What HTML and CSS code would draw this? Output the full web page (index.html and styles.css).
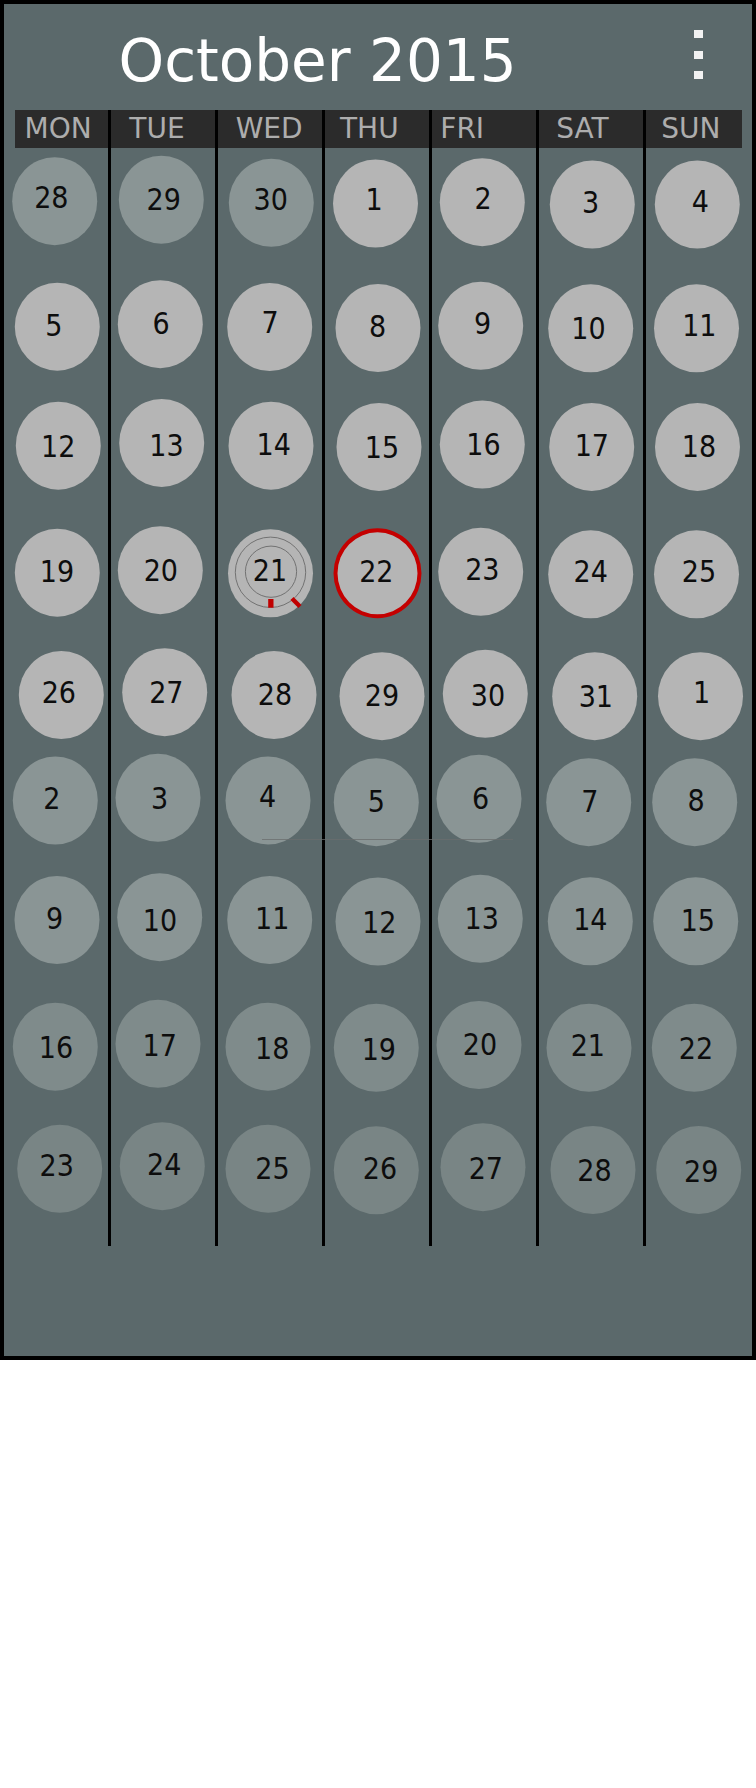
FILE: index.html
```html
<!DOCTYPE html>
<html lang="en">
<head>
<meta charset="utf-8">
<title>October 2015</title>
<link rel="stylesheet" href="styles.css">
</head>
<body>
<div class="frame">
  <div class="top">
    <h1 class="title">October 2015</h1>
    <div class="menu"><i></i><i></i><i></i></div>
  </div>
  <div class="cal">
    <div class="col c1">
      <div class="wd">MON</div>
      <div class="days">
        <div class="day"><div class="circ a"><span>28</span></div></div>
        <div class="day"><div class="circ"><span>5</span></div></div>
        <div class="day"><div class="circ"><span>12</span></div></div>
        <div class="day"><div class="circ"><span>19</span></div></div>
        <div class="day"><div class="circ"><span>26</span></div></div>
        <div class="day"><div class="circ a"><span>2</span></div></div>
        <div class="day"><div class="circ a"><span>9</span></div></div>
        <div class="day"><div class="circ b"><span>16</span></div></div>
        <div class="day"><div class="circ c"><span>23</span></div></div>
      </div>
    </div>
    <div class="col c2">
      <div class="wd">TUE</div>
      <div class="days">
        <div class="day"><div class="circ a"><span>29</span></div></div>
        <div class="day"><div class="circ"><span>6</span></div></div>
        <div class="day"><div class="circ"><span>13</span></div></div>
        <div class="day"><div class="circ"><span>20</span></div></div>
        <div class="day"><div class="circ"><span>27</span></div></div>
        <div class="day"><div class="circ a"><span>3</span></div></div>
        <div class="day"><div class="circ a"><span>10</span></div></div>
        <div class="day"><div class="circ b"><span>17</span></div></div>
        <div class="day"><div class="circ c"><span>24</span></div></div>
      </div>
    </div>
    <div class="col c3">
      <div class="wd">WED</div>
      <div class="days">
        <div class="day"><div class="circ a"><span>30</span></div></div>
        <div class="day"><div class="circ"><span>7</span></div></div>
        <div class="day"><div class="circ"><span>14</span></div></div>
        <div class="day"><div class="circ marked">
          <svg class="rings" viewBox="-42.5 -44 85 88" width="85" height="88" aria-hidden="true">
            <circle cx="0" cy="-1" r="35.2" fill="none" stroke="#727272" stroke-width="1"/>
            <circle cx="0.5" cy="-1.6" r="25.6" fill="none" stroke="#727272" stroke-width="1"/>
            <rect x="-2.3" y="25.7" width="5.3" height="8.7" fill="#c00000"/>
            <line x1="21.5" y1="25.2" x2="29.5" y2="33.2" stroke="#c00000" stroke-width="4.5"/>
          </svg>
          <span>21</span></div></div>
        <div class="day"><div class="circ"><span>28</span></div></div>
        <div class="day"><div class="circ a"><span>4</span></div></div>
        <div class="day"><div class="circ a"><span>11</span></div></div>
        <div class="day"><div class="circ b"><span>18</span></div></div>
        <div class="day"><div class="circ c"><span>25</span></div></div>
      </div>
    </div>
    <div class="col c4">
      <div class="wd">THU</div>
      <div class="days">
        <div class="day"><div class="circ"><span>1</span></div></div>
        <div class="day"><div class="circ"><span>8</span></div></div>
        <div class="day"><div class="circ"><span>15</span></div></div>
        <div class="day"><div class="circ today"><span>22</span></div></div>
        <div class="day"><div class="circ"><span>29</span></div></div>
        <div class="day"><div class="circ a"><span>5</span></div></div>
        <div class="day"><div class="circ a"><span>12</span></div></div>
        <div class="day"><div class="circ b"><span>19</span></div></div>
        <div class="day"><div class="circ c"><span>26</span></div></div>
      </div>
    </div>
    <div class="col c5">
      <div class="wd">FRI</div>
      <div class="days">
        <div class="day"><div class="circ"><span>2</span></div></div>
        <div class="day"><div class="circ"><span>9</span></div></div>
        <div class="day"><div class="circ"><span>16</span></div></div>
        <div class="day"><div class="circ"><span>23</span></div></div>
        <div class="day"><div class="circ"><span>30</span></div></div>
        <div class="day"><div class="circ a"><span>6</span></div></div>
        <div class="day"><div class="circ a"><span>13</span></div></div>
        <div class="day"><div class="circ b"><span>20</span></div></div>
        <div class="day"><div class="circ c"><span>27</span></div></div>
      </div>
    </div>
    <div class="col c6">
      <div class="wd">SAT</div>
      <div class="days">
        <div class="day"><div class="circ"><span>3</span></div></div>
        <div class="day"><div class="circ"><span>10</span></div></div>
        <div class="day"><div class="circ"><span>17</span></div></div>
        <div class="day"><div class="circ"><span>24</span></div></div>
        <div class="day"><div class="circ"><span>31</span></div></div>
        <div class="day"><div class="circ a"><span>7</span></div></div>
        <div class="day"><div class="circ a"><span>14</span></div></div>
        <div class="day"><div class="circ b"><span>21</span></div></div>
        <div class="day"><div class="circ c"><span>28</span></div></div>
      </div>
    </div>
    <div class="col c7">
      <div class="wd">SUN</div>
      <div class="days">
        <div class="day"><div class="circ"><span>4</span></div></div>
        <div class="day"><div class="circ"><span>11</span></div></div>
        <div class="day"><div class="circ"><span>18</span></div></div>
        <div class="day"><div class="circ"><span>25</span></div></div>
        <div class="day"><div class="circ"><span>1</span></div></div>
        <div class="day"><div class="circ a"><span>8</span></div></div>
        <div class="day"><div class="circ a"><span>15</span></div></div>
        <div class="day"><div class="circ b"><span>22</span></div></div>
        <div class="day"><div class="circ c"><span>29</span></div></div>
      </div>
    </div>
    <div class="scan"></div>
  </div>
</div>
</body>
</html>
```
FILE: styles.css
```css
html, body { margin: 0; padding: 0; background: #ffffff; }

.frame {
  width: 756px;
  height: 1360px;
  box-sizing: border-box;
  border: 4px solid #000;
  background: #5b696b;
}

.top {
  height: 106px;
  display: flex;
  align-items: flex-start;
}
.title {
  margin: 28px 0 0 0;
  padding-left: 114.5px;
  font: 400 58px/58px "DejaVu Sans", Verdana, sans-serif;
  color: #ffffff;
}
.menu {
  margin: 26px 49px 0 auto;
  display: flex;
  flex-direction: column;
  gap: 12.5px;
}
.menu i { display: block; width: 9px; height: 8px; background: #f2f2f2; }

.cal {
  position: relative;
  width: 746px;
  display: grid;
  grid-template-columns: repeat(7, 1fr);
  column-gap: 3px;
  background: #000;
}
.col {
  background: #5b696b;
  display: flex;
  flex-direction: column;
  padding-bottom: 18px;
  min-width: 0;
}
.wd {
  height: 38px;
  background: #2b2b2b;
  color: #adadad;
  font: 400 28px/38px "DejaVu Sans", Verdana, sans-serif;
  white-space: nowrap;
}
.c1 .wd { margin-left: 10.5px; padding-left: 10.1px; }
.c2 .wd { padding-left: 18.3px; }
.c3 .wd { padding-left: 17.7px; }
.c4 .wd { padding-left: 15px; }
.c5 .wd { padding-left: 8.3px; }
.c6 .wd { padding-left: 17.2px; }
.c7 .wd { margin-right: 8.5px; padding-left: 15.2px; }

.days { display: flex; flex-direction: column; }
.day {
  height: 120px;
  display: flex;
  align-items: center;
  justify-content: center;
}
.circ {
  position: relative;
  width: 85px;
  height: 88px;
  flex: none;
  box-sizing: border-box;
  border-radius: 50%;
  background: #b5b5b5;
  display: flex;
  align-items: center;
  justify-content: center;
  transform: translate(var(--dx, 0px), var(--dy, 0px));
  color: #0d0d0d;
  font: 400 30px/30px "DejaVu Sans Condensed", "DejaVu Sans", sans-serif;
  font-stretch: condensed;
}
.circ span { display: block; position: relative; transform: translate(var(--tx, 0px), var(--ty, 0px)); }
.circ.a { background: #8a9595; }
.circ.b { background: #7f8b8b; }
.circ.c { background: #798585; }
.circ.today { width: 88px; height: 90px; border: 4px solid #c40000; }
.rings { position: absolute; left: 0; top: 0; }

.scan {
  position: absolute;
  left: 257.7px;
  top: 729.3px;
  width: 251.6px;
  height: 1px;
  background: rgba(105, 110, 110, 0.75);
}

/* per-cell jitter: circle offset (dx,dy) and number offset (tx,ty) */
.c1 .day:nth-child(1){--dx:-1.8px;--dy:-6.8px;--tx:-2.9px;--ty:-3.7px}
.c2 .day:nth-child(1){--dx:-2.2px;--dy:-8.3px;--tx:2.9px;--ty:0.5px}
.c3 .day:nth-child(1){--dx:0.8px;--dy:-5.2px;--tx:-0.1px;--ty:-2.5px}
.c4 .day:nth-child(1){--dx:-2px;--dy:-4.5px;--tx:-1px;--ty:-4px}
.c5 .day:nth-child(1){--dx:-2.2px;--dy:-5.8px;--tx:1.4px;--ty:-3.4px}
.c6 .day:nth-child(1){--dx:0.8px;--dy:-3.5px;--tx:-1.3px;--ty:-1.7px}
.c7 .day:nth-child(1){--dx:-1.2px;--dy:-3.5px;--tx:3.5px;--ty:-2.3px}

.c1 .day:nth-child(2){--dx:0.8px;--dy:-1.3px;--tx:-3px;--ty:-1.2px}
.c2 .day:nth-child(2){--dx:-3.2px;--dy:-3.8px;--tx:1.4px;--ty:-0.4px}
.c3 .day:nth-child(2){--dx:-0.8px;--dy:-1px;--tx:0.8px;--ty:-4.2px}
.c4 .day:nth-child(2){--dx:0.5px;--dy:0px;--tx:0px;--ty:-0.7px}
.c5 .day:nth-child(2){--dx:-3.8px;--dy:-2.2px;--tx:2.3px;--ty:-2px}
.c6 .day:nth-child(2){--dx:-0.8px;--dy:0.3px;--tx:-1.7px;--ty:0.9px}
.c7 .day:nth-child(2){--dx:-2px;--dy:0.3px;--tx:3.3px;--ty:-2.1px}

.c1 .day:nth-child(3){--dx:1.8px;--dy:-2.3px;--tx:0.4px;--ty:1.3px}
.c2 .day:nth-child(3){--dx:-1.8px;--dy:-5.1px;--tx:5.3px;--ty:3px}
.c3 .day:nth-child(3){--dx:0.5px;--dy:-2.3px;--tx:3.2px;--ty:-1px}
.c4 .day:nth-child(3){--dx:1.5px;--dy:-1.1px;--tx:3.5px;--ty:1.2px}
.c5 .day:nth-child(3){--dx:-2.2px;--dy:-3.5px;--tx:1.7px;--ty:0.2px}
.c6 .day:nth-child(3){--dx:0.2px;--dy:-1.1px;--tx:0.6px;--ty:-1px}
.c7 .day:nth-child(3){--dx:-1px;--dy:-1.1px;--tx:2px;--ty:0.1px}

.c1 .day:nth-child(4){--dx:0.8px;--dy:4.7px;--tx:0.2px;--ty:-0.3px}
.c2 .day:nth-child(4){--dx:-3.2px;--dy:2.2px;--tx:1px;--ty:1.1px}
.c3 .day:nth-child(4){--dx:0px;--dy:5.3px;--tx:0px;--ty:-2.5px}
.c4 .day:nth-child(4){--dx:0.5px;--dy:5.3px;--tx:-1.2px;--ty:-1.1px}
.c5 .day:nth-child(4){--dx:-3.8px;--dy:3.8px;--tx:2.1px;--ty:-1.6px}
.c6 .day:nth-child(4){--dx:-0.8px;--dy:6.3px;--tx:0.5px;--ty:-1.9px}
.c7 .day:nth-child(4){--dx:-2px;--dy:6.3px;--tx:3px;--ty:-1.9px}

.c1 .day:nth-child(5){--dx:4.8px;--dy:7px;--tx:-2px;--ty:-2.5px}
.c2 .day:nth-child(5){--dx:1.2px;--dy:4.2px;--tx:2.1px;--ty:0.3px}
.c3 .day:nth-child(5){--dx:3.5px;--dy:7px;--tx:1.5px;--ty:-0.5px}
.c4 .day:nth-child(5){--dx:4.5px;--dy:8.2px;--tx:0.5px;--ty:-0.6px}
.c5 .day:nth-child(5){--dx:0.8px;--dy:5.8px;--tx:3.2px;--ty:2px}
.c6 .day:nth-child(5){--dx:3.2px;--dy:8.2px;--tx:1.6px;--ty:0.3px}
.c7 .day:nth-child(5){--dx:2px;--dy:8.2px;--tx:1.7px;--ty:-3.7px}

.c1 .day:nth-child(6){--dx:-1.2px;--dy:-7.5px;--tx:-3px;--ty:-1.3px}
.c2 .day:nth-child(6){--dx:-5.5px;--dy:-10.2px;--tx:2px;--ty:0.7px}
.c3 .day:nth-child(6){--dx:-2.5px;--dy:-7.5px;--tx:0.2px;--ty:-4px}
.c4 .day:nth-child(6){--dx:-1.2px;--dy:-5.8px;--tx:0.5px;--ty:-0.6px}
.c5 .day:nth-child(6){--dx:-5.5px;--dy:-9.2px;--tx:2px;--ty:-0.1px}
.c6 .day:nth-child(6){--dx:-2.8px;--dy:-5.8px;--tx:1.6px;--ty:0px}
.c7 .day:nth-child(6){--dx:-3.8px;--dy:-5.8px;--tx:2px;--ty:-1.2px}

.c1 .day:nth-child(7){--dx:0.5px;--dy:-8px;--tx:-2px;--ty:-0.8px}
.c2 .day:nth-child(7){--dx:-3.8px;--dy:-10.8px;--tx:0.8px;--ty:3.3px}
.c3 .day:nth-child(7){--dx:-0.8px;--dy:-8px;--tx:3px;--ty:-1.2px}
.c4 .day:nth-child(7){--dx:0.5px;--dy:-6.5px;--tx:1.8px;--ty:1.3px}
.c5 .day:nth-child(7){--dx:-4.2px;--dy:-9.2px;--tx:1.9px;--ty:0.4px}
.c6 .day:nth-child(7){--dx:-1.2px;--dy:-6.7px;--tx:0.5px;--ty:-1.1px}
.c7 .day:nth-child(7){--dx:-2.8px;--dy:-6.7px;--tx:2.6px;--ty:-0.3px}

.c1 .day:nth-child(8){--dx:-1.2px;--dy:-1.3px;--tx:1.2px;--ty:0.8px}
.c2 .day:nth-child(8){--dx:-5.5px;--dy:-4.2px;--tx:2.2px;--ty:2px}
.c3 .day:nth-child(8){--dx:-2.5px;--dy:-1.3px;--tx:4.7px;--ty:2.5px}
.c4 .day:nth-child(8){--dx:-1.2px;--dy:-0.2px;--tx:3px;--ty:1.7px}
.c5 .day:nth-child(8){--dx:-5.5px;--dy:-3px;--tx:1.5px;--ty:0.2px}
.c6 .day:nth-child(8){--dx:-2.5px;--dy:-0.2px;--tx:-0.7px;--ty:-1.6px}
.c7 .day:nth-child(8){--dx:-4.2px;--dy:-0.2px;--tx:2.2px;--ty:0.7px}

.c1 .day:nth-child(9){--dx:3.2px;--dy:0.8px;--tx:-2.5px;--ty:-3px}
.c2 .day:nth-child(9){--dx:-1.2px;--dy:-1.8px;--tx:2.4px;--ty:-1.7px}
.c3 .day:nth-child(9){--dx:-2.5px;--dy:0.8px;--tx:5px;--ty:-0.3px}
.c4 .day:nth-child(9){--dx:-1.2px;--dy:2.3px;--tx:4.2px;--ty:-1.8px}
.c5 .day:nth-child(9){--dx:-1.5px;--dy:-0.8px;--tx:3.3px;--ty:2px}
.c6 .day:nth-child(9){--dx:1.5px;--dy:2px;--tx:2px;--ty:0.8px}
.c7 .day:nth-child(9){--dx:0.2px;--dy:2px;--tx:3px;--ty:1.8px}
```
